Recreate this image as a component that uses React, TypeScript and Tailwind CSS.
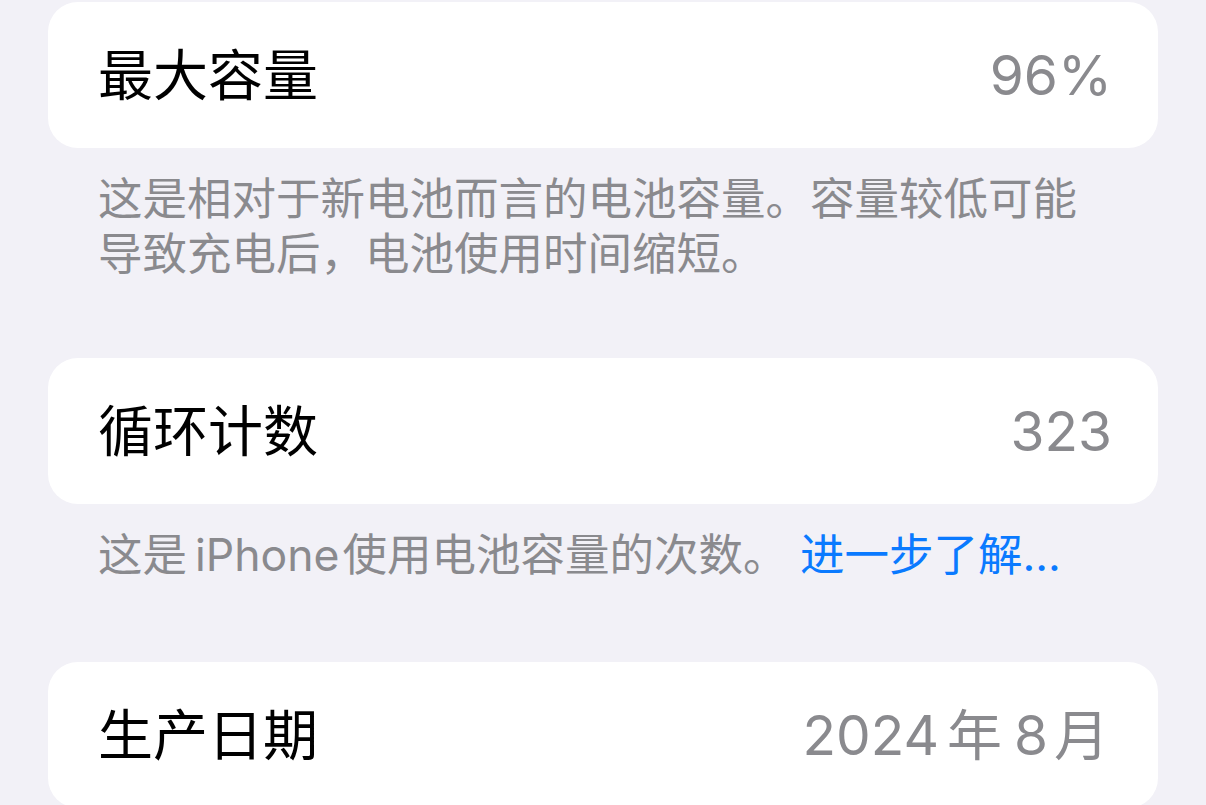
const font = "font-['Inter','Noto_Sans_CJK_SC',sans-serif]";

type RowProps = {
  label: string;
  value: React.ReactNode;
};

function Row({ label, value }: RowProps) {
  return (
    <div className="h-[146px] rounded-[30px] bg-white px-[50px] flex items-center justify-between">
      <span className="text-[55px] leading-[66px] text-black">{label}</span>
      <span className="-mr-[4px] text-[55px] leading-[66px] text-[#8a8a8e]">{value}</span>
    </div>
  );
}

export default function App() {
  return (
    <div className={`min-h-screen bg-[#f2f1f7] px-[48px] pt-[2px] ${font}`}>
      {/* maximum capacity */}
      <Row label="最大容量" value="96%" />
      <p className="px-[50px] pt-[24px] mb-[76px] text-[44.5px] leading-[55px] text-[#8a8a8e]">
        这是相对于新电池而言的电池容量。容量较低可能导致充电后，电池使用时间缩短。
      </p>

      {/* cycle count */}
      <Row label="循环计数" value="323" />
      <p className="px-[50px] pt-[24px] mb-[79px] text-[44.5px] leading-[55px] text-[#8a8a8e] whitespace-nowrap">
        这是<span className="ml-[8px] mr-[3px]">iPhone</span>使用电池容量的次数。{" "}
        <span className="text-[#0a7aff]">进一步了解...</span>
      </p>

      {/* manufacture date */}
      <Row
        label="生产日期"
        value={
          <>
            2024<span className="ml-[8px] mr-[12px]">年</span>8
            <span className="ml-[6px] mr-[3px]">月</span>
          </>
        }
      />
    </div>
  );
}
